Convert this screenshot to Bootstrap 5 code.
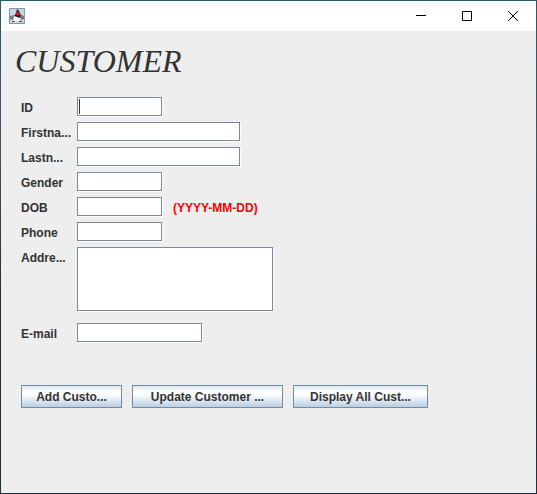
<!DOCTYPE html>
<html lang="en">
<head>
<meta charset="utf-8">
<meta name="viewport" content="width=device-width, initial-scale=1">
<title>Customer</title>
<link href="https://cdn.jsdelivr.net/npm/bootstrap@5.3.0/dist/css/bootstrap.min.css" rel="stylesheet">
<style>
body { font: bold 12px/16px "Liberation Sans", Arial, sans-serif; color: #333; background: linear-gradient(to bottom, #285a69, #3f5660 30%, #2b2a31 60%, #1f303c); }
.app-frame { padding: 1px; }
.title-bar { height: 30px; padding-left: 8px; }
.win-btn { width: 46px; height: 30px; border: 0; padding: 0; background: #fff; color: #000; }
.pane { background: #eee; padding: 12px 20px 24px; }
.form-title { font: italic 32px/36px "Liberation Serif", "Times New Roman", serif; color: #333; margin: 0 0 18px -6px; }
.form-grid { display: grid; grid-template-columns: 50px 1fr; column-gap: 6px; row-gap: 5px; }
.form-grid label, .hint { height: 20px; line-height: 22px; }
.swing-field { display: block; height: 19px; padding: 2px; border: 1px solid #7a8a99; border-radius: 0; background: #fff; color: #333; box-shadow: 1px 1px 0 #fff; outline: 0; resize: none; font: 12px/14px "Liberation Sans", Arial, sans-serif; }
.swing-field:focus { caret-color: transparent; background: linear-gradient(#333, #333) 1px 1px / 1px 15px no-repeat #fff; }
.w-short { width: 85px; }
.w-mid { width: 125px; }
.w-long { width: 163px; }
.w-area { width: 196px; height: 64px; margin-bottom: 7px; }
.hint { color: #f00; margin-left: 11px; }
.swing-btn { height: 23px; padding: 0; border: 1px solid #7a8a99; border-radius: 0; color: #333; font: inherit; background: linear-gradient(#dde8f3, #fff 30%, #fff 40%, #b8cfe5); }
.actions { margin-top: 42px; gap: 10px; }
.b-add { width: 101px; }
.b-update { width: 151px; }
.b-display { width: 135px; }
</style>
<script src="https://cdn.jsdelivr.net/npm/bootstrap@5.3.0/dist/js/bootstrap.bundle.min.js"></script>
</head>
<body>
<div class="app-frame d-flex flex-column min-vh-100">
  <header class="title-bar d-flex align-items-center bg-white">
    <svg width="16" height="16" viewBox="0 0 16 16" aria-hidden="true">
      <path fill="#c6d6e2" d="M0 0h16v16H0z"/>
      <path fill="none" stroke="#8397a9" d="M.5.5h15v15H.5z"/>
      <path fill="#777" d="M1 8l4-1 1 4-2 1-3-1zM15 8l-3-1-2 4 2 1 3-1z"/>
      <path fill="#f8f8f8" d="M5 6l6 2 1 6-3-1-2 1-3 1z"/>
      <path fill="#444" d="M3 13h3v1H3zM10 13h3v1h-3z"/>
      <path fill="#222" d="M8 1l2 2 2 4-1 3-3-1-3-1 2-3z"/>
      <ellipse cx="9" cy="5.500" rx="2" ry="1.500" fill="#ed2024"/>
    </svg>
    <div class="d-flex ms-auto">
      <button class="win-btn" type="button" aria-label="Minimize"><svg class="d-block m-auto" width="10" height="10" shape-rendering="crispEdges"><path d="M0 4.5h10" stroke="#000"/></svg></button>
      <button class="win-btn" type="button" aria-label="Maximize"><svg class="d-block m-auto" width="10" height="10"><path d="M.5.5h9v9h-9z" fill="none" stroke="#000"/></svg></button>
      <button class="win-btn" type="button" aria-label="Close"><svg class="d-block m-auto" width="10" height="10"><path d="M0 0l10 10M10 0L0 10" stroke="#000"/></svg></button>
    </div>
  </header>
  <main class="pane flex-grow-1">
    <h1 class="form-title">CUSTOMER</h1>
    <form>
      <div class="form-grid">
        <label for="cid">ID</label><input id="cid" class="swing-field w-short" type="text" autofocus>
        <label for="first">Firstna...</label><input id="first" class="swing-field w-long" type="text">
        <label for="last">Lastn...</label><input id="last" class="swing-field w-long" type="text">
        <label for="gender">Gender</label><input id="gender" class="swing-field w-short" type="text">
        <label for="dob">DOB</label><div class="d-flex"><input id="dob" class="swing-field w-short" type="text" aria-describedby="dobHint"><span id="dobHint" class="hint">(YYYY-MM-DD)</span></div>
        <label for="phone">Phone</label><input id="phone" class="swing-field w-short" type="text">
        <label for="address">Addre...</label><textarea id="address" class="swing-field w-area"></textarea>
        <label for="email">E-mail</label><input id="email" class="swing-field w-mid" type="email">
      </div>
      <div class="actions d-flex flex-wrap">
        <button type="button" class="swing-btn b-add">Add Custo...</button>
        <button type="button" class="swing-btn b-update">Update Customer ...</button>
        <button type="button" class="swing-btn b-display">Display All Cust...</button>
      </div>
    </form>
  </main>
</div>
</body>
</html>
